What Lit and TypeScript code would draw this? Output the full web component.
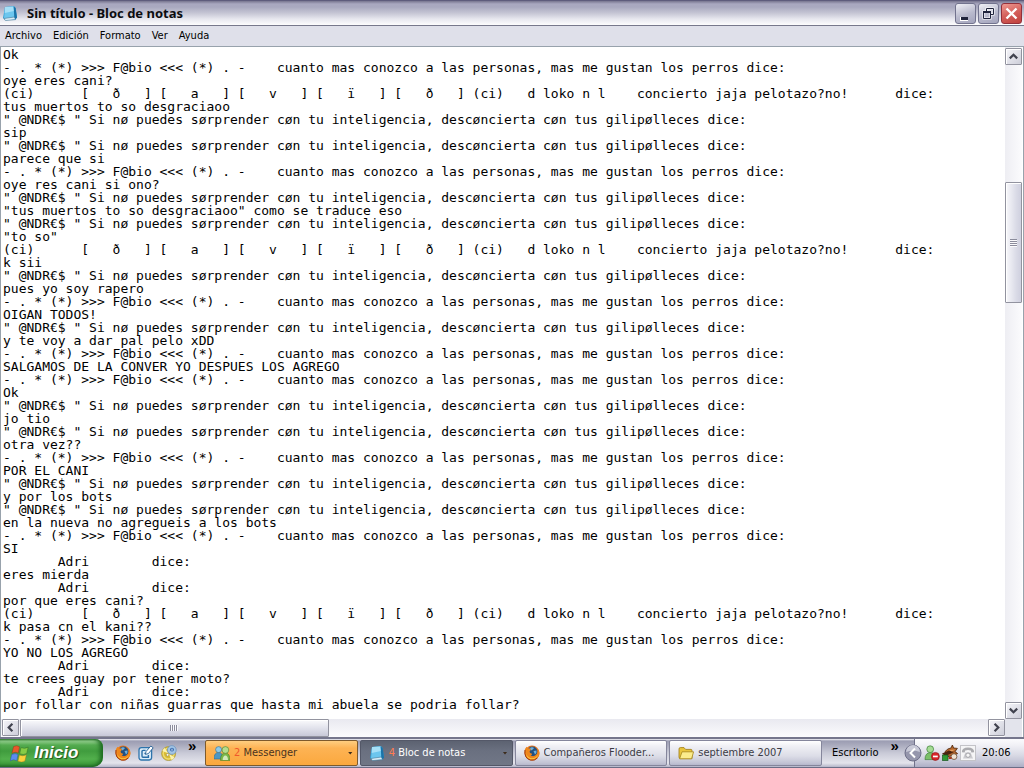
import { LitElement, html, css, svg } from "lit";
import { customElement } from "lit/decorators.js";

const FABIO = "- . * (*) >>> F@bio <<< (*) . -    cuanto mas conozco a las personas, mas me gustan los perros dice:";
const CI =
  "(ci)      [   ð   ] [   a   ] [   v   ] [   ï   ] [   ð   ] (ci)   d loko n l    concierto jaja pelotazo?no!      dice:";
const ANDRES = '" @NDR€$ " Si nø puedes sørprender cøn tu inteligencia, descøncierta cøn tus gilipølleces dice:';
const ADRI = "       Adri        dice:";

const LINES = [
  "Ok", FABIO,
  "oye eres cani?", CI,
  "tus muertos to so desgraciaoo", ANDRES,
  "sip", ANDRES,
  "parece que si", FABIO,
  "oye res cani si ono?", ANDRES,
  '"tus muertos to so desgraciaoo" como se traduce eso', ANDRES,
  '"to so"', CI,
  "k sii", ANDRES,
  "pues yo soy rapero", FABIO,
  "OIGAN TODOS!", ANDRES,
  "y te voy a dar pal pelo xDD", FABIO,
  "SALGAMOS DE LA CONVER YO DESPUES LOS AGREGO", FABIO,
  "Ok", ANDRES,
  "jo tio", ANDRES,
  "otra vez??", FABIO,
  "POR EL CANI", ANDRES,
  "y por los bots", ANDRES,
  "en la nueva no agregueis a los bots", FABIO,
  "SI", ADRI,
  "eres mierda", ADRI,
  "por que eres cani?", CI,
  "k pasa cn el kani??", FABIO,
  "YO NO LOS AGREGO", ADRI,
  "te crees guay por tener moto?", ADRI,
  "por follar con niñas guarras que hasta mi abuela se podria follar?",
];

const notepad = svg`
  <path d="M3 2 L12 1 L13.6 3 L15 12 L13 15 L3 15 L1 13 Z" fill="#2f9bd0"/>
  <path d="M3 2 L11.6 1.5 L12.4 12 L2 13.5 Z" fill="#6cc6ee"/>
  <path d="M3 2 L11.6 1.5 L12 6 L2.7 8 Z" fill="#a6e0f8"/>
  <path d="M2 13.5 L12.4 12 L13.6 14.6 L3.4 15.6 Z" fill="#d8edf8" stroke="#4a7d9c" stroke-width=".6"/>
  <path d="M11.6 1.5 L13.6 3 L15 12.5 L13.6 14.6 L12.4 12 Z" fill="#1b73a8"/>`;

const firefox = svg`
  <circle cx="8" cy="8" r="7.4" fill="#e8761c"/>
  <circle cx="8.4" cy="6.6" r="5" fill="#24507f"/>
  <path d="M6 3 Q8 1.6 10 3 Q9 5 7 5.4 Z M9.5 6 L12.5 5.5 Q13 8 11 9.5 Z" fill="#6fb0da"/>
  <path d="M1 4 L2.6 1.8 L4 3.4 Q6 3 7 4.6 L5.6 6.4 Q5.4 8.2 7.6 8.4 Q9 9.6 6.6 10.2 Q10 12.6 13 9 Q14.6 6.6 13.4 3.2 Q16.8 7.4 14.6 11.6 Q11 16.6 5.4 14.6 Q-.4 12 1 4 Z" fill="#ee861c"/>
  <path d="M2.2 4.4 Q1.2 10 5 12.4 Q10.6 15 14.4 9.6 Q12 14.8 7 14.6 Q1 13 2.2 4.4 Z" fill="#fcc93e"/>
  <path d="M1 5 Q-.2 13 6.4 15.1 Q10.6 16 13.4 13" fill="none" stroke="#9c360e" stroke-width="1"/>`;

const desktop = svg`
  <rect x="1" y="2.6" width="12.6" height="12.4" rx="2.4" fill="#dcecf8" stroke="#2d74ac" stroke-width="1.3"/>
  <path d="M7.6 5.4 H5 Q4 5.4 4 6.4 V11 Q4 12.2 5 12.2 H10.4 V10" fill="none" stroke="#2a6ea6" stroke-width="1.4"/>
  <path d="M6.4 8.4 H9" stroke="#2a6ea6" stroke-width="1.2"/>
  <path d="M7.4 9.4 L8 6.6 L12.8 1 L15.2 2.8 L10.4 8.6 Z" fill="#fff" stroke="#235f93" stroke-width=".9"/>`;

const disc = svg`
  <circle cx="7.6" cy="8.6" r="7" fill="#d9bc34" stroke="#a3923a" stroke-width=".7"/>
  <circle cx="7.6" cy="8.6" r="5.4" fill="none" stroke="#efdc70" stroke-width="1.4"/>
  <path d="M7.6 8.6 L1.4 6 A7 7 0 0 1 3.6 3 Z M7.6 8.6 L13.4 12.4 A7 7 0 0 1 10.6 15 Z" fill="#fbf3b0"/>
  <circle cx="10.8" cy="5" r="4.4" fill="#a3c6e6" stroke="#6d93c0" stroke-width=".8"/>
  <circle cx="11" cy="4.6" r="1.9" fill="#2c62ac"/>
  <path d="M11 3.6 V5.8" stroke="#fff" stroke-width=".9"/>
  <circle cx="6.6" cy="9.8" r="1.4" fill="#f6f6f6" stroke="#a3923a" stroke-width=".7"/>`;

const buddies = svg`
  <path d="M0 14 Q0 7.4 4.6 7.4 Q9 7.4 9 14 Z" fill="#4d97c4" stroke="#2b6c94" stroke-width=".6"/>
  <circle cx="4.6" cy="4.6" r="3" fill="#8fcbe8" stroke="#2b6c94" stroke-width=".6"/>
  <path d="M6.4 15.4 Q6.4 8 11.4 8 Q16 8 16 15.4 Z" fill="#79b648" stroke="#4c7f26" stroke-width=".6"/>
  <circle cx="11.4" cy="5" r="3.4" fill="#b5dc8c" stroke="#4c7f26" stroke-width=".6"/>
  <path d="M8.6 15 Q9 10.4 11.4 10.4 Q13.8 10.4 14 15 Z" fill="#d3e9bc"/>`;

const folder = svg`
  <path d="M1 4 Q1 2.6 2.4 2.6 H6 L7.6 4.4 H13 Q14 4.4 14 5.6 V13.6 H2.4 Q1 13.6 1 12 Z" fill="#e9c53c" stroke="#9c7a12" stroke-width=".8"/>
  <path d="M4 6.8 H15.6 L13.6 13.8 H1.6 Z" fill="#fbec8c" stroke="#a5851c" stroke-width=".8"/>`;

const flag = svg`
  <path d="M3.4 2.4 Q6.4 .8 9 2.6 L7.9 8.6 Q5.2 7 1.8 8.8 Z" fill="#e8582a" stroke="#7c3a1c" stroke-width=".4"/>
  <path d="M10.4 3.4 Q13.4 5 17.2 3 L15.8 9 Q12.6 10.8 9.2 9.2 Z" fill="#86cc46" stroke="#2c6420" stroke-width=".4"/>
  <path d="M1.6 10 Q5 8.2 7.6 10 L6.4 15.8 Q3.4 14 .2 16 Z" fill="#5b8cee" stroke="#284c98" stroke-width=".4"/>
  <path d="M8.9 10.4 Q12 12 15.5 10.2 L14.2 16 Q10.8 18 7.5 16.4 Z" fill="#fbd13c" stroke="#8c7018" stroke-width=".4"/>`;

const trayBuddy = svg`
  <path d="M1 14.6 Q1 7.6 6.6 7.6 Q12 7.6 12 14.6 Z" fill="#7cc06a" stroke="#3c8038" stroke-width=".7"/>
  <circle cx="6.2" cy="4.2" r="3.4" fill="#a5dc94" stroke="#3c8038" stroke-width=".7"/>
  <circle cx="11.4" cy="11.4" r="4" fill="#d8262a" stroke="#8c1216" stroke-width=".6"/>
  <rect x="9" y="10.6" width="4.8" height="1.7" fill="#fff"/>`;

const trayFox = svg`
  <path d="M3 6.6 Q6 3 9 3 L10.4 0 L11.6 3 L15.4 3.4 L13 6.6 L15.6 8.6 L11 10.6 L4 12 Z" fill="#b4662c" stroke="#4c2408" stroke-width=".8"/>
  <path d="M0 8.6 L7 5.4 L12 7 L8 9 L3 11 Z" fill="#4a2410"/>
  <path d="M7 5 L13 4.6 L10 6.6 Z" fill="#e8a060"/>
  <rect x=".6" y="10" width="5.4" height="5.4" fill="#2f9a34" stroke="#14561a" stroke-width=".7"/>
  <circle cx="12" cy="11.6" r="2.9" fill="#efe3d4" stroke="#6c4a30" stroke-width=".8"/>
  <path d="M6.6 13 H9.6" stroke="#a8371c" stroke-width="2"/>`;

const trayPhone = svg`
  <rect x=".5" y=".5" width="15" height="15" fill="#f5f5f6" stroke="#c3c3c8"/>
  <path d="M1.8 7.2 Q2 2.6 8 2.6 Q14 2.6 14.2 7.2 L11.4 7.4 L10.8 5.4 Q8 4.6 5.2 5.4 L4.6 7.4 Z" fill="#ababaf"/>
  <path d="M5.4 7.4 H10.6 L13 13.6 H3 Z" fill="#cbcbcf"/>
  <circle cx="8" cy="10.2" r="2.2" fill="#f6f6f6" stroke="#a3a3a8"/>`;

const icon = (art: unknown, size = 16, box = 16) =>
  html`<svg class="icon" width=${size} height=${size} viewBox="0 0 ${box} ${box}" aria-hidden="true">${art}</svg>`;

const chevron = (d: string) =>
  html`<svg width="9" height="9" viewBox="0 0 9 9" aria-hidden="true"><path d=${d} fill="none" stroke="#40424e" stroke-width="2.2"/></svg>`;

@customElement("app-root")
export class AppRoot extends LitElement {
  static styles = css`
    :host {
      display: flex;
      flex-direction: column;
      height: 100vh;
      overflow: hidden;
      background: #dfe0ea;
      color: #000;
      font: 11px/14px "DejaVu Sans Condensed", "DejaVu Sans", sans-serif;
    }
    * { box-sizing: border-box; }
    button { font: inherit; color: inherit; margin: 0; padding: 0; border: 0; background: none; }
    svg { display: block; flex: none; }

    .title {
      flex: none;
      display: flex;
      align-items: center;
      height: 26px;
      padding: 0 2px;
      border-top: 1px solid #5e5c7c;
      border-bottom: 1px solid #77788c;
      background: linear-gradient(#77758f 0, #a9a8c0 3px, #a9a9bf 6px, #c5c5d4 12px, #e7e7ef 18px, #fdfdfe 24px);
    }
    .title h1 {
      flex: 1;
      margin: 0 0 0 9px;
      font: bold 13px/16px "Noto Sans", "Open Sans", sans-serif;
      color: #0c0c10;
    }
    .wins { display: flex; gap: 2px; }
    .win {
      display: grid;
      place-items: center;
      width: 21px;
      height: 21px;
      border: 1px solid #72738e;
      border-radius: 3px;
      background: linear-gradient(160deg, #f0f0f6, #b9bacd 55%, #a3a4bc);
    }
    .close { border-color: #93303a; background: linear-gradient(160deg, #ee9a92, #d4605c 50%, #c0403c); }

    .menu { flex: none; display: flex; gap: 11px; height: 20px; padding: 0 5px; background: #dfe0ea; }
    .menu button { height: 20px; }

    .doc {
      flex: 1;
      min-height: 0;
      display: grid;
      grid-template: minmax(0, 1fr) 18px / minmax(0, 1fr) 17px;
      padding: 0 1px 0 0;
      border: 1px solid #98a2ac;
      border-bottom: 0;
      background: #fff;
    }
    .text {
      display: block;
      width: 100%;
      height: 100%;
      margin: 0;
      padding: 1px 2px 0;
      border: 0;
      outline: 0;
      resize: none;
      overflow: hidden;
      white-space: pre;
      background: #fff;
      color: #000;
      font: 13px/13px "DejaVu Sans Mono", monospace;
    }
    .vbar, .hbar { display: flex; }
    .vbar { flex-direction: column; padding-top: 1px; background: linear-gradient(90deg, #eeeef3, #fbfbfd); }
    .hbar { padding-left: 1px; background: linear-gradient(#e9e9f0, #fbfbfd); }
    .corner { background: #e3e4ec; }
    .arrow, .thumb {
      flex: none;
      display: grid;
      place-items: center;
      border: 1px solid #92939f;
      border-radius: 1px;
      box-shadow: inset 1px 1px #fff;
    }
    .arrow { width: 17px; height: 17px; background: linear-gradient(135deg, #f6f6fa, #cdced9); }
    .track { flex: 1; display: flex; }
    .vbar .track { flex-direction: column; }
    .vbar .before { flex: 118; }
    .vbar .thumb { flex: 120; background: linear-gradient(90deg, #f8f8fb, #d9dae6 70%, #cfd0df); }
    .vbar .after { flex: 402; }
    .hbar .thumb { flex: 307; margin-left: 1px; background: linear-gradient(#fafafc, #dfe0ea 55%, #c8c9d8); }
    .hbar .after { flex: 660; }
    .vgrip { width: 7px; height: 8px; background: repeating-linear-gradient(#8b8c9c 0 1px, #fafafc 1px 2px); }
    .hgrip { width: 8px; height: 6px; background: repeating-linear-gradient(90deg, #8b8c9c 0 1px, #fafafc 1px 2px); }

    .bar {
      flex: none;
      display: flex;
      height: 31px;
      border-top: 2px solid #75768c;
      border-bottom: 1px solid #6c6d86;
      background: linear-gradient(#f3f3f7 0, #9c9db3 2px, #a9aabd 6px, #c9cad7 14px, #e4e4ec 24px, #b4b5c8 28px);
    }
    .start {
      flex: none;
      display: flex;
      align-items: center;
      gap: 5px;
      width: 103px;
      padding-left: 10px;
      border-radius: 0 8px 10px 0;
      background: linear-gradient(#3f8c3c 0, #9ad494 2px, #54ab50 6px, #409c3e 12px, #52b04c 20px, #3f9c3c 25px, #246f28 28px);
      box-shadow: inset -3px 0 4px #1c6a20;
      color: #fff;
      font: italic bold 17px/20px "Liberation Sans", sans-serif;
      text-shadow: 1px 1px 1px #1c5020;
    }
    .quick { flex: none; display: flex; align-items: center; gap: 7px; width: 102px; padding-left: 12px; }
    .quick button { display: block; }
    .quick .more, .desk .more { align-self: flex-start; font: bold 15px/14px "Liberation Sans", sans-serif; }
    .quick .more { margin-left: 4px; }
    .tasks { flex: 1; display: grid; grid-template-columns: repeat(4, minmax(0, 1fr)); gap: 2px; padding: 1px 0; }
    .task {
      display: flex;
      align-items: center;
      gap: 4px;
      min-width: 0;
      padding: 0 4px 0 8px;
      border: 1px solid #85869c;
      border-radius: 2px;
      background: linear-gradient(#fff 0, #f0f0f5 5px, #dcdde7 15px, #c2c3d4 22px, #a9aac2 26px);
      color: #3b3b45;
      text-align: left;
    }
    .task .name { flex: 1; white-space: nowrap; overflow: hidden; }
    .alert { border-color: #7e5a2c; background: linear-gradient(#ffce80, #fdb354 30%, #fba83e); color: #4a3420; }
    .active { border-color: #545868; background: linear-gradient(#5c6271, #6a7080 40%, #717786); color: #fff; }
    .count { color: #f0582c; }
    .active .count { color: #ff7c50; }
    .caret { width: 5px; height: 3px; background: #3c2c1c; clip-path: polygon(0 0, 100% 0, 50% 100%); }
    .desk { flex: none; display: flex; align-items: center; gap: 12px; width: 92px; padding-left: 10px; }
    .tray {
      flex: none;
      display: flex;
      align-items: center;
      gap: 2px;
      width: 110px;
      border-left: 1px solid #70718a;
      background: linear-gradient(#fbfbfd 0, #f1f1f6 6px, #d9dae5 16px, #c3c4d5 23px, #adaec5 28px);
    }
    .hide { display: block; margin: 0 0 0 -11px; }
    .clock { margin-left: 4px; }
  `;

  render() {
    return html`
      <header class="title">
        ${icon(notepad)}
        <h1>Sin título - Bloc de notas</h1>
        <div class="wins">
          <button class="win" aria-label="Minimizar">
            <svg width="19" height="19"><path d="M4 15h8" stroke="#fff" stroke-width="4"/><path d="M5 14.5h7" stroke="#20243c" stroke-width="3"/></svg>
          </button>
          <button class="win" aria-label="Restaurar">
            <svg width="19" height="19" fill="none">
              <path d="M7.5 7V4.5h7v6H12M4.5 7.5h7v7h-7z" stroke="#fff" stroke-width="2"/>
              <path d="M7.5 7V4.5h7v6H12M4.5 7.5h7v7h-7z" stroke="#20243c"/>
              <path d="M4 8h8" stroke="#20243c" stroke-width="2"/>
            </svg>
          </button>
          <button class="win close" aria-label="Cerrar">
            <svg width="19" height="19"><path d="M4.5 4.5l10 10M14.5 4.5l-10 10" stroke="#fff" stroke-width="2.4"/></svg>
          </button>
        </div>
      </header>
      <nav class="menu">
        ${["Archivo", "Edición", "Formato", "Ver", "Ayuda"].map((m) => html`<button>${m}</button>`)}
      </nav>
      <main class="doc">
        <textarea class="text" aria-label="Documento" wrap="off" spellcheck="false" .value=${LINES.join("\n")}></textarea>
        <div class="vbar">
          <button class="arrow" aria-label="Subir">${chevron("M.8 6.4L4.5 2.7L8.2 6.4")}</button>
          <div class="track">
            <div class="before"></div>
            <div class="thumb"><div class="vgrip"></div></div>
            <div class="after"></div>
          </div>
          <button class="arrow" aria-label="Bajar">${chevron("M.8 2.6L4.5 6.3L8.2 2.6")}</button>
        </div>
        <div class="hbar">
          <button class="arrow" aria-label="Izquierda">${chevron("M6.4 .8L2.7 4.5L6.4 8.2")}</button>
          <div class="track">
            <div class="thumb"><div class="hgrip"></div></div>
            <div class="after"></div>
          </div>
          <button class="arrow" aria-label="Derecha">${chevron("M2.6 .8L6.3 4.5L2.6 8.2")}</button>
        </div>
        <div class="corner"></div>
      </main>
      <footer class="bar">
        <button class="start">${icon(flag, 19, 18)}<span>Inicio</span></button>
        <div class="quick">
          <button aria-label="Firefox">${icon(firefox)}</button>
          <button aria-label="Mostrar escritorio">${icon(desktop)}</button>
          <button aria-label="Reproductor">${icon(disc)}</button>
          <button class="more">»</button>
        </div>
        <div class="tasks">
          <button class="task alert">
            ${icon(buddies)}<span class="name"><span class="count">2</span> Messenger</span><span class="caret"></span>
          </button>
          <button class="task active">
            ${icon(notepad)}<span class="name"><span class="count">4</span> Bloc de notas</span><span class="caret"></span>
          </button>
          <button class="task">${icon(firefox)}<span class="name">Compañeros Flooder...</span></button>
          <button class="task">${icon(folder)}<span class="name">septiembre 2007</span></button>
        </div>
        <div class="desk"><span>Escritorio</span><button class="more">»</button></div>
        <div class="tray">
          <button class="hide" aria-label="Ocultar iconos">
            <svg width="18" height="18">
              <circle cx="9" cy="9" r="8" fill="#9596ac" stroke="#6d6e88"/>
              <path d="M2 8a7 7 0 0 1 14 0Q9 5 2 8Z" fill="#c9cad8"/>
              <path d="M11 4.5L6.5 9L11 13.5" fill="none" stroke="#fff" stroke-width="2"/>
            </svg>
          </button>
          ${icon(trayBuddy)} ${icon(trayFox)} ${icon(trayPhone)}
          <time class="clock">20:06</time>
        </div>
      </footer>
    `;
  }
}
